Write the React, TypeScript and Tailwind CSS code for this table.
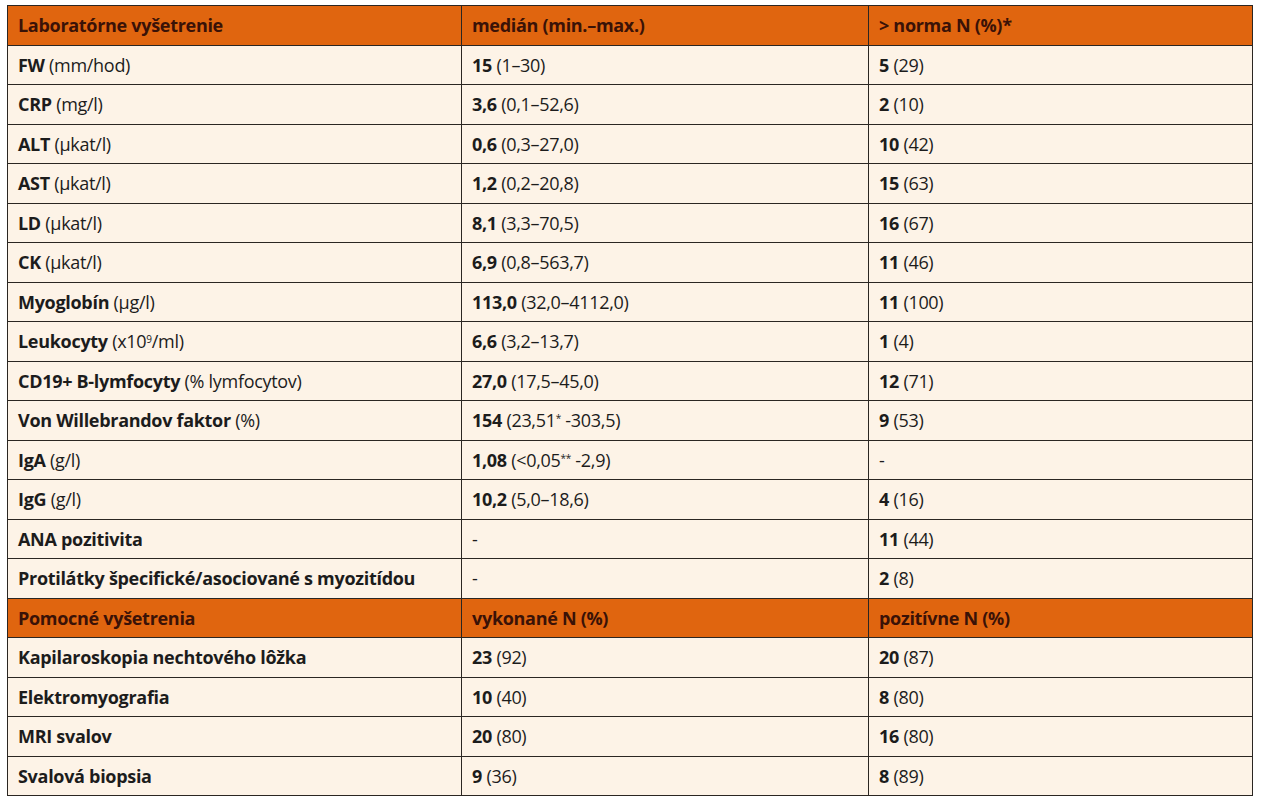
type Row = { name: string; unit?: React.ReactNode; mid: React.ReactNode; last: React.ReactNode };

const Val = ({ b, r }: { b: string; r?: React.ReactNode }) => (
  <>
    <span className="font-bold">{b}</span>
    {r !== undefined && <span> {r}</span>}
  </>
);

const lab: Row[] = [
  { name: "FW", unit: "(mm/hod)", mid: <Val b="15" r="(1–30)" />, last: <Val b="5" r="(29)" /> },
  { name: "CRP", unit: "(mg/l)", mid: <Val b="3,6" r="(0,1–52,6)" />, last: <Val b="2" r="(10)" /> },
  { name: "ALT", unit: "(µkat/l)", mid: <Val b="0,6" r="(0,3–27,0)" />, last: <Val b="10" r="(42)" /> },
  { name: "AST", unit: "(µkat/l)", mid: <Val b="1,2" r="(0,2–20,8)" />, last: <Val b="15" r="(63)" /> },
  { name: "LD", unit: "(µkat/l)", mid: <Val b="8,1" r="(3,3–70,5)" />, last: <Val b="16" r="(67)" /> },
  { name: "CK", unit: "(µkat/l)", mid: <Val b="6,9" r="(0,8–563,7)" />, last: <Val b="11" r="(46)" /> },
  { name: "Myoglobín", unit: "(µg/l)", mid: <Val b="113,0" r="(32,0–4112,0)" />, last: <Val b="11" r="(100)" /> },
  {
    name: "Leukocyty",
    unit: (
      <>
        (x10<sup className="text-[10px]">9</sup>/ml)
      </>
    ),
    mid: <Val b="6,6" r="(3,2–13,7)" />,
    last: <Val b="1" r="(4)" />,
  },
  { name: "CD19+ B-lymfocyty", unit: "(% lymfocytov)", mid: <Val b="27,0" r="(17,5–45,0)" />, last: <Val b="12" r="(71)" /> },
  {
    name: "Von Willebrandov faktor",
    unit: "(%)",
    mid: (
      <Val
        b="154"
        r={
          <>
            (23,51<sup className="text-[10px]">*</sup> -303,5)
          </>
        }
      />
    ),
    last: <Val b="9" r="(53)" />,
  },
  {
    name: "IgA",
    unit: "(g/l)",
    mid: (
      <Val
        b="1,08"
        r={
          <>
            (&lt;0,05<sup className="text-[10px]">**</sup> -2,9)
          </>
        }
      />
    ),
    last: "-",
  },
  { name: "IgG", unit: "(g/l)", mid: <Val b="10,2" r="(5,0–18,6)" />, last: <Val b="4" r="(16)" /> },
  { name: "ANA pozitivita", mid: "-", last: <Val b="11" r="(44)" /> },
  { name: "Protilátky špecifické/asociované s myozitídou", mid: "-", last: <Val b="2" r="(8)" /> },
];

const aux: Row[] = [
  { name: "Kapilaroskopia nechtového lôžka", mid: <Val b="23" r="(92)" />, last: <Val b="20" r="(87)" /> },
  { name: "Elektromyografia", mid: <Val b="10" r="(40)" />, last: <Val b="8" r="(80)" /> },
  { name: "MRI svalov", mid: <Val b="20" r="(80)" />, last: <Val b="16" r="(80)" /> },
  { name: "Svalová biopsia", mid: <Val b="9" r="(36)" />, last: <Val b="8" r="(89)" /> },
];

const cell = "border border-[#2b2622] px-[10px] align-middle whitespace-nowrap";

function Head({ cols }: { cols: string[] }) {
  return (
    <tr className="h-[39.5px] bg-[#e0650f] text-[#3a1207] font-bold">
      {cols.map((c) => (
        <td key={c} className={cell}>
          {c}
        </td>
      ))}
    </tr>
  );
}

function Body({ rows }: { rows: Row[] }) {
  return (
    <>
      {rows.map((r) => (
        <tr key={r.name} className="h-[39.5px] bg-[#fdf3e7] text-[#1c1c1c]">
          <td className={cell}>
            <span className="font-bold">{r.name}</span>
            {r.unit && <span> {r.unit}</span>}
          </td>
          <td className={cell}>{r.mid}</td>
          <td className={cell}>{r.last}</td>
        </tr>
      ))}
    </>
  );
}

export default function App() {
  return (
    <div className="w-[1267px] h-[800px] bg-white pt-[5px] pl-[7px]" style={{ fontFamily: '"Open Sans", "Noto Sans", sans-serif' }}>
      <table className="table-fixed border-collapse border-[1.5px] border-[#2b2622] text-[18px] leading-none tracking-[-0.3px]">
        <colgroup>
          <col className="w-[454px]" />
          <col className="w-[407px]" />
          <col className="w-[384px]" />
        </colgroup>
        <tbody>
          <Head cols={["Laboratórne vyšetrenie", "medián (min.–max.)", "> norma N (%)*"]} />
          <Body rows={lab} />
          <Head cols={["Pomocné vyšetrenia", "vykonané N (%)", "pozitívne N (%)"]} />
          <Body rows={aux} />
        </tbody>
      </table>
    </div>
  );
}
